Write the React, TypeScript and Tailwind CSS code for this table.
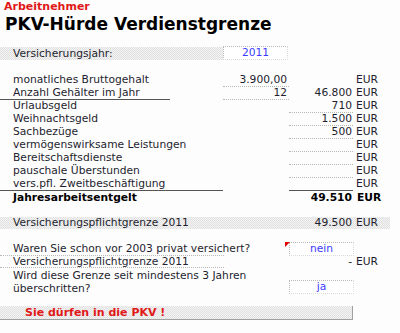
import React from 'react';

const font = { fontFamily: '"DejaVu Sans", Verdana, sans-serif' };

const hatch =
  'bg-[repeating-conic-gradient(#e0e0e0_0_25%,#f4f4f4_0_50%)] bg-[length:2px_2px]';

type Row = {
  label: string;
  v1?: string;
  v2?: string;
  eur?: boolean;
  b1?: boolean;
  b2?: boolean;
};

const incomeRows: Row[] = [
  { label: 'monatliches Bruttogehalt', v1: '3.900,00', eur: true, b1: true },
  { label: 'Anzahl Gehälter im Jahr', v1: '12', v2: '46.800', eur: true, b1: true },
  { label: 'Urlaubsgeld', v2: '710', eur: true, b2: true },
  { label: 'Weihnachtsgeld', v2: '1.500', eur: true, b2: true },
  { label: 'Sachbezüge', v2: '500', eur: true, b2: true },
  { label: 'vermögenswirksame Leistungen', eur: true, b2: true },
  { label: 'Bereitschaftsdienste', eur: true, b2: true },
  { label: 'pauschale Überstunden', eur: true, b2: true },
];

const InputBox: React.FC<{ value: string; flag?: boolean }> = ({ value, flag }) => (
  <div className="relative w-[65px] h-[14px] border-t border-l border-[#b8b8b8] border-r border-b border-r-[#dcdcdc] border-b-[#dcdcdc] border-dotted bg-white text-center text-[#3b3bff] leading-[12px]">
    {flag && (
      <div className="absolute -left-[5px] -top-[1px] w-0 h-0 border-t-[5px] border-t-[#e00000] border-r-[5px] border-r-transparent" />
    )}
    {value}
  </div>
);

const App: React.FC = () => {
  return (
    <div className="w-[400px] h-[333px] bg-[#fdfdfd] text-[#1e1e2e] text-[10.7px] overflow-hidden" style={font}>
      {/* Header */}
      <div className="pl-[4px] pt-[1px] h-[12px] leading-[11px] text-[11px] font-bold text-[#e01818]">Arbeitnehmer</div>
      <div className="pl-[5px] h-[22px] leading-[25px] text-[17px] font-bold text-black">PKV-Hürde Verdienstgrenze</div>

      {/* Versicherungsjahr */}
      <div className="flex mt-[12px] h-[14px]">
        <div className={`w-[223px] h-[13px] mt-[1px] pl-[13px] leading-[13px] ${hatch}`}>Versicherungsjahr:</div>
        <InputBox value="2011" />
      </div>

      {/* Income rows */}
      <div className="mt-[14px]">
        {incomeRows.map((r, i) => (
          <div key={r.label} className="relative flex h-[13px] leading-[12px]">
            <div className="w-[223px] pl-[13px] whitespace-nowrap">{r.label}</div>
            <div className={`w-[66px] text-right pr-[2px] ${r.b1 ? 'border-b border-dotted border-[#b8b8b8]' : ''}`}>{r.v1}</div>
            <div className={`w-[64px] text-right pr-[1px] ${r.b2 ? 'border-b border-dotted border-[#b8b8b8]' : ''}`}>{r.v2}</div>
            <div className="w-[37px] pl-[3px]">{r.eur ? 'EUR' : ''}</div>
            {i === 1 && <div className="absolute left-0 bottom-0 w-[170px] h-px bg-[#555]" />}
          </div>
        ))}
        <div className="flex h-[13px] leading-[12px]">
          <div className="w-[223px] pl-[13px] border-b border-[#555]">vers.pfl. Zweitbeschäftigung</div>
          <div className="w-[66px]" />
          <div className="w-[64px] border-b border-[#555]" />
          <div className="w-[37px] pl-[3px]">EUR</div>
        </div>
        <div className="flex h-[14px] leading-[14px] font-bold text-black">
          <div className="w-[223px] pl-[13px]">Jahresarbeitsentgelt</div>
          <div className="w-[66px]" />
          <div className="w-[64px] text-right pr-[1px]">49.510</div>
          <div className="w-[37px] pl-[4px]">EUR</div>
        </div>
      </div>

      {/* Pflichtgrenze */}
      <div className={`flex mt-[12px] h-[12px] leading-[12px] w-[390px] ${hatch}`}>
        <div className="w-[223px] pl-[13px]">Versicherungspflichtgrenze 2011</div>
        <div className="w-[66px]" />
        <div className="w-[64px] text-right pr-[1px]">49.500</div>
        <div className="w-[37px] pl-[3px]">EUR</div>
      </div>

      {/* Questions */}
      <div className="mt-[13px]">
        <div className="flex h-[14px] leading-[14px]">
          <div className="w-[224px] pl-[13px] whitespace-nowrap border-b border-dotted border-[#b8b8b8]">Waren Sie schon vor 2003 privat versichert?</div>
          <div className="w-[65px]" />
          <InputBox value="nein" flag />
        </div>
        <div className="flex h-[12px] leading-[12px]">
          <div className="w-[224px] pl-[13px] whitespace-nowrap border-b border-dotted border-[#b8b8b8]">Versicherungspflichtgrenze 2011</div>
          <div className="w-[65px]" />
          <div className="w-[64px] text-right pr-[1px]">-</div>
          <div className="w-[37px] pl-[3px]">EUR</div>
        </div>
        <div className="flex h-[26px]">
          <div className="w-[289px] pl-[13px] leading-[13px] pt-px">
            Wird diese Grenze seit mindestens 3 Jahren<br />überschritten?
          </div>
          <div className="pt-[12px]">
            <InputBox value="ja" />
          </div>
        </div>
      </div>

      {/* Result */}
      <div className={`mt-[12px] w-[353px] h-[14px] border-b border-r border-[#a0a0a0] pl-[25px] leading-[13px] font-bold text-[11px] text-[#e01818] ${hatch}`}>
        Sie dürfen in die PKV !
      </div>
    </div>
  );
};

export default App;
